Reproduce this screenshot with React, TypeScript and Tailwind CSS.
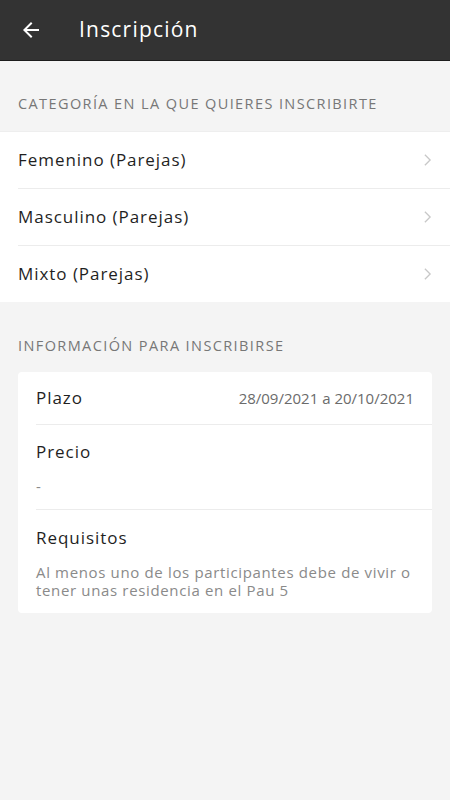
export default function App() {
  const categorias = ["Femenino (Parejas)", "Masculino (Parejas)", "Mixto (Parejas)"];

  return (
    <div className="min-h-[800px] bg-[#f4f4f4] font-['Open_Sans',sans-serif]">
      {/* cabecera */}
      <header className="h-[61px] bg-[#333333] border-b border-[#1c1c1c] flex items-center">
        <button className="ml-[19px] w-[24px] h-[24px] flex items-center justify-center">
          <svg viewBox="0 0 24 24" className="w-[24px] h-[24px] fill-white">
            <path d="M20 11H7.83l5.59-5.59L12 4l-8 8 8 8 1.41-1.41L7.83 13H20v-2z" />
          </svg>
        </button>
        <h1 className="ml-[36px] text-white text-[21px] tracking-[1.2px]">Inscripción</h1>
      </header>

      {/* categorías */}
      <div className="px-[18px] pt-[32px] pb-[16px] text-[14.5px] leading-[22px] text-[#777777] tracking-[1.4px] uppercase">
        Categoría en la que quieres inscribirte
      </div>
      <ul className="bg-white border-t border-[#eeeeee]">
        {categorias.map((c, i) => {
          const last = i === categorias.length - 1;
          return (
            <li key={c} className="pl-[18px]">
              <div
                className={
                  "flex items-center justify-between pr-[18px] " +
                  (last ? "h-[56px]" : "h-[57px] border-b border-[#ececec]")
                }
              >
                <span className="text-[17px] text-[#1f1f1f] tracking-[0.95px]">{c}</span>
                <svg viewBox="0 0 10 16" className="w-[9px] h-[14px] fill-none stroke-[#c8c8c8] stroke-[1.5]">
                  <path d="M2 2l6 6-6 6" />
                </svg>
              </div>
            </li>
          );
        })}
      </ul>

      {/* información */}
      <div className="px-[18px] pt-[33px] pb-[15px] text-[14.5px] leading-[22px] text-[#777777] tracking-[1.4px] uppercase">
        Información para inscribirse
      </div>
      <div className="mx-[18px] bg-white rounded-[4px] pl-[18px]">
        <div className="h-[53px] flex items-center justify-between pr-[18px] border-b border-[#ececec]">
          <span className="text-[17px] text-[#1f1f1f] tracking-[0.95px]">Plazo</span>
          <span className="text-[15px] text-[#6b6b6b]">28/09/2021 a 20/10/2021</span>
        </div>
        <div className="pt-[16px] pb-[13px] pr-[18px] border-b border-[#ececec]">
          <div className="text-[17px] text-[#1f1f1f] leading-[22px] tracking-[0.95px]">Precio</div>
          <div className="mt-[13px] text-[15px] text-[#8a8a8a] leading-[20px]">-</div>
        </div>
        <div className="pt-[17px] pb-[14px] pr-[18px]">
          <div className="text-[17px] text-[#1f1f1f] leading-[22px] tracking-[0.95px]">Requisitos</div>
          <p className="mt-[14px] text-[15px] text-[#8a8a8a] leading-[18px] tracking-[0.65px]">
            Al menos uno de los participantes debe de vivir o tener unas residencia en el Pau 5
          </p>
        </div>
      </div>
    </div>
  );
}
